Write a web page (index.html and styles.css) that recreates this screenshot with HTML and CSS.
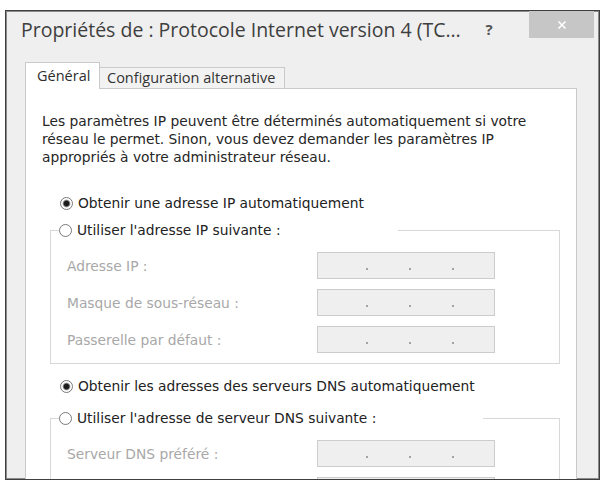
FILE: index.html
```html
<!DOCTYPE html>
<html lang="fr">
<head>
<meta charset="utf-8">
<title>Propriétés de : Protocole Internet version 4 (TCP/IPv4)</title>
<link rel="stylesheet" href="styles.css">
</head>
<body>
<div class="window">
  <div class="titlebar">
    <div class="title">Propriétés de : Protocole Internet version 4 (TC…</div>
    <div class="help">?</div>
    <div class="close">
      <svg width="10" height="10" viewBox="0 0 10 10"><path d="M1.5 1.5 L8.5 8.5 M8.5 1.5 L1.5 8.5" stroke="#ffffff" stroke-width="1.6" fill="none"/></svg>
    </div>
  </div>
  <div class="tabs">
    <div class="tab tab-active">Général</div>
    <div class="tab">Configuration alternative</div>
  </div>
  <div class="panel">
    <p class="intro">Les paramètres IP peuvent être déterminés automatiquement si votre<br>réseau le permet. Sinon, vous devez demander les paramètres IP<br>appropriés à votre administrateur réseau.</p>

    <div class="radio-row first">
      <span class="radio checked"></span>
      <span class="radio-label">Obtenir une adresse IP automatiquement</span>
    </div>

    <fieldset class="group">
      <legend class="legend legend-ip">
        <span class="radio-row">
          <span class="radio"></span>
          <span class="radio-label">Utiliser l'adresse IP suivante :</span>
        </span>
      </legend>
      <div class="fields">
        <span class="field-label">Adresse IP :</span>
        <span class="ipbox"><i></i><i></i><i></i></span>
        <span class="field-label">Masque de sous-réseau :</span>
        <span class="ipbox"><i></i><i></i><i></i></span>
        <span class="field-label">Passerelle par défaut :</span>
        <span class="ipbox"><i></i><i></i><i></i></span>
      </div>
    </fieldset>

    <div class="radio-row dns-auto">
      <span class="radio checked"></span>
      <span class="radio-label">Obtenir les adresses des serveurs DNS automatiquement</span>
    </div>

    <fieldset class="group group-dns">
      <legend class="legend legend-dns">
        <span class="radio-row">
          <span class="radio"></span>
          <span class="radio-label">Utiliser l'adresse de serveur DNS suivante :</span>
        </span>
      </legend>
      <div class="fields">
        <span class="field-label">Serveur DNS préféré :</span>
        <span class="ipbox"><i></i><i></i><i></i></span>
        <span class="field-label"></span>
        <span class="ipbox"><i></i><i></i><i></i></span>
      </div>
    </fieldset>
  </div>
</div>
</body>
</html>
```

FILE: styles.css
```css
html, body {
  margin: 0;
  padding: 0;
  background: #ffffff;
}

body {
  padding: 10px 0 0 5px;
  font-family: "DejaVu Sans", "Liberation Sans", sans-serif;
}

.window {
  box-sizing: border-box;
  width: 595px;
  height: 470px;
  border: 1px solid #3f3f3f;
  box-shadow: inset 0 0 0 1px #8a8a8a;
  background: #efefef;
  overflow: hidden;
  display: flex;
  flex-direction: column;
}

.titlebar {
  flex: 0 0 51px;
  display: flex;
  align-items: flex-start;
}

.title {
  flex: 1;
  padding: 7px 0 0 15px;
  font-family: "Open Sans", "Noto Sans", sans-serif;
  font-size: 19.5px;
  line-height: 24px;
  color: #3e3e3e;
  white-space: nowrap;
}

.help {
  width: 24px;
  margin: 10px 28px 0 0;
  text-align: center;
  font-family: "Open Sans", sans-serif;
  font-weight: 700;
  font-size: 15px;
  line-height: 16px;
  color: #555555;
}

.close {
  width: 65px;
  height: 27px;
  margin-right: 5px;
  background: #c6c6c6;
  display: flex;
  align-items: center;
  justify-content: center;
}

.tabs {
  display: flex;
  align-items: flex-end;
  margin-left: 19px;
  height: 26px;
}

.tab {
  box-sizing: border-box;
  height: 21px;
  padding: 0 0 0 7px;
  width: 185px;
  border: 1px solid #cacaca;
  border-left: none;
  border-bottom: none;
  background: #f2f2f2;
  font-family: "Open Sans", "Noto Sans", sans-serif;
  font-size: 14.5px;
  line-height: 20px;
  color: #333;
  white-space: nowrap;
}

.tab-active {
  width: 75px;
  height: 27px;
  padding: 3px 0 0 11px;
  margin-bottom: -1px;
  border-left: 1px solid #cacaca;
  background: #ffffff;
  position: relative;
  z-index: 1;
  color: #2e2e2e;
}

.panel {
  box-sizing: border-box;
  width: 552px;
  margin-left: 19px;
  height: 420px;
  flex: 0 0 auto;
  border: 1px solid #cacaca;
  background: #ffffff;
  padding: 23px 0 0 16px;
  color: #222222;
  font-size: 13.8px;
}

.intro {
  margin: 0;
  line-height: 18px;
  white-space: nowrap;
  color: #262626;
}

.radio-row {
  display: flex;
  align-items: center;
  gap: 5px;
  height: 18px;
  white-space: nowrap;
}

.radio-row.first {
  margin: 28px 0 0 18px;
}

.radio-row.dns-auto {
  margin: 13px 0 0 18px;
}

.radio {
  box-sizing: border-box;
  flex: 0 0 13px;
  width: 13px;
  height: 13px;
  border: 1px solid #7a7a7a;
  border-radius: 50%;
  background: #ffffff;
}

.radio.checked {
  background: radial-gradient(circle, #1c1c1c 0, #1c1c1c 2.4px, #8c8c8c 3.3px, #ffffff 4.3px);
}

.radio-label {
  line-height: 18px;
  color: #222222;
}

.group {
  box-sizing: border-box;
  width: 510px;
  margin: 9px 0 0 8px;
  padding: 13px 0 10px 16px;
  border: 1px solid #d8d8d8;
  min-width: 0;
}

.legend {
  padding: 0;
  margin-left: -8px;
  height: 18px;
}

.legend-ip {
  width: 339px;
}

.legend-dns {
  width: 424px;
}

.group-dns {
  margin-top: 14px;
}

.fields {
  display: grid;
  grid-template-columns: 250px 178px;
  row-gap: 10px;
  align-items: center;
}

.field-label {
  color: #a8a8a8;
  white-space: nowrap;
  min-height: 1px;
}

.ipbox {
  box-sizing: border-box;
  height: 27px;
  border: 1px solid #cccccc;
  background: #efefef;
  display: flex;
  align-items: flex-start;
  gap: 41px;
  padding: 15px 0 0 48px;
}

.ipbox i {
  width: 2px;
  height: 2px;
  background: #a3a3a3;
}
```
